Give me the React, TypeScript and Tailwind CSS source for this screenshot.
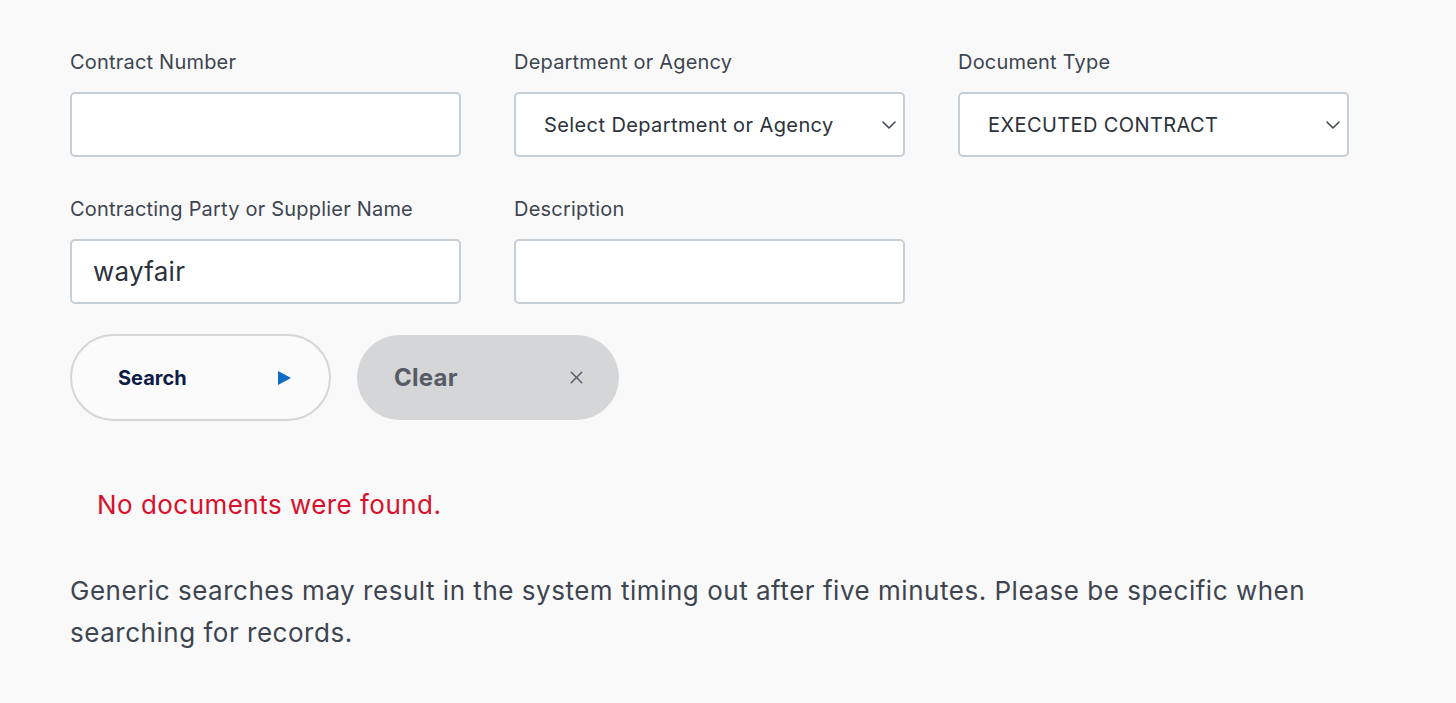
import { X } from 'lucide-react';

const font = { fontFamily: 'Inter, "Noto Sans", sans-serif' };

function Chevron() {
  return (
    <svg width="14" height="8" viewBox="0 0 14 8" fill="none">
      <path d="M1 1 L7 7 L13 1" stroke="#3d4551" strokeWidth="1.5" strokeLinecap="round" strokeLinejoin="round" />
    </svg>
  );
}

function Field({ label, children }: { label: string; children: React.ReactNode }) {
  return (
    <div className="flex flex-col w-[391px]">
      <label className="text-[20px] leading-[28px] tracking-[0.01em] text-[#3d4551] mb-[16px]">{label}</label>
      {children}
    </div>
  );
}

function TextBox({ value = '' }: { value?: string }) {
  return (
    <div className="h-[65px] rounded-[5px] border-2 border-[#c6ced6] bg-white px-[21px] flex items-center text-[26px] tracking-[0.01em] text-[#2b323b]">
      {value}
    </div>
  );
}

function SelectBox({ value }: { value: string }) {
  return (
    <div className="h-[65px] rounded-[5px] border-2 border-[#c6ced6] bg-white pl-[28px] pr-[7px] flex items-center justify-between text-[20px] tracking-[0.02em] text-[#2b323b]">
      <span>{value}</span>
      <Chevron />
    </div>
  );
}

export default function App() {
  return (
    <div className="min-h-screen bg-[#f9f9f9] pl-[70px] pt-[48px]" style={font}>
      <div className="flex gap-[53px]">
        <Field label="Contract Number">
          <TextBox />
        </Field>
        <Field label="Department or Agency">
          <SelectBox value="Select Department or Agency" />
        </Field>
        <Field label="Document Type">
          <SelectBox value="EXECUTED CONTRACT" />
        </Field>
      </div>

      <div className="flex gap-[53px] mt-[38px]">
        <Field label="Contracting Party or Supplier Name">
          <TextBox value="wayfair" />
        </Field>
        <Field label="Description">
          <TextBox />
        </Field>
      </div>

      <div className="flex items-center gap-[26px] mt-[30px]">
        <button className="w-[261px] h-[87px] rounded-full border-2 border-[#d6d6d6] bg-[#fbfbfb] flex items-center justify-between pl-[46px] pr-[38px]">
          <span className="text-[20px] font-bold text-[#0d1c47]">Search</span>
          <svg width="13" height="14" viewBox="0 0 13 14">
            <path d="M0 0 L13 7 L0 14 Z" fill="#0b6bc7" />
          </svg>
        </button>
        <button className="w-[262px] h-[85px] rounded-full bg-[#d5d6d8] flex items-center justify-between pl-[37px] pr-[32px]">
          <span className="text-[24px] font-bold tracking-[0.01em] text-[#565c65]">Clear</span>
          <X size={21} strokeWidth={1.7} className="text-[#565c65]" />
        </button>
      </div>

      <p className="mt-[66px] ml-[27px] text-[26px] leading-[36px] tracking-[0.018em] text-[#d8102c]">No documents were found.</p>

      <p className="mt-[47px] text-[26px] leading-[42px] tracking-[0.02em] text-[#3d4551] max-w-[1280px]">
        Generic searches may result in the system timing out after five minutes. Please be specific when searching for records.
      </p>
    </div>
  );
}
